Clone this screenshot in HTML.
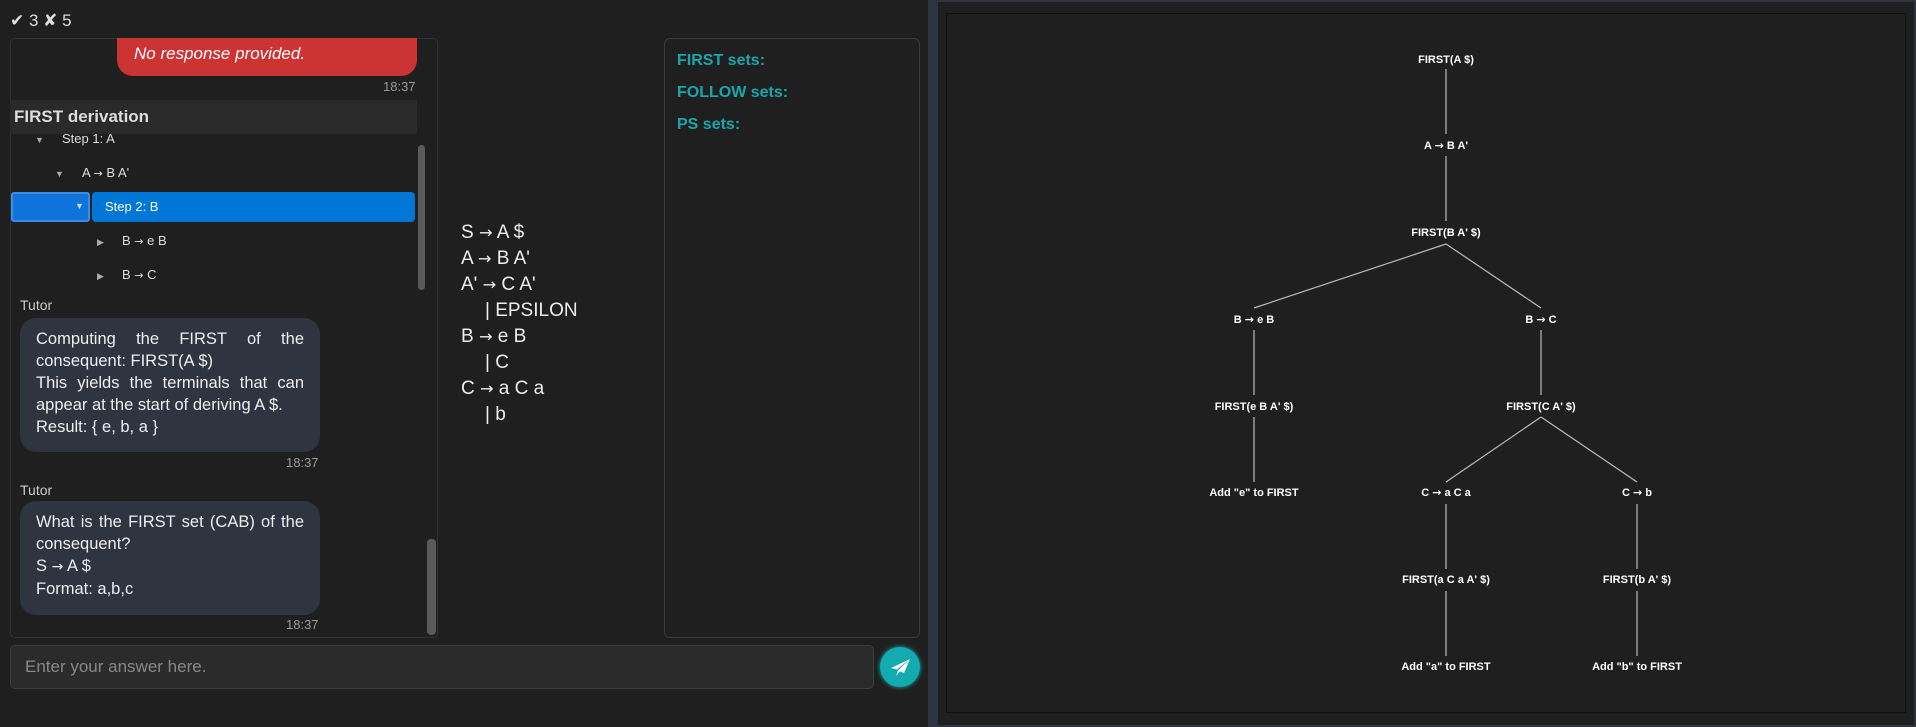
<!DOCTYPE html>
<html><head><meta charset="utf-8"><style>
*{box-sizing:border-box;margin:0;padding:0}
body{width:1916px;height:727px;background:#1f1f1f;color:#e6e6e6;font-family:"Liberation Sans","DejaVu Sans",sans-serif;position:relative;overflow:hidden}
.a{position:absolute;white-space:nowrap}
.bub{position:absolute;background:#2f3441;border-radius:16px;color:#eee;font-size:16.5px;line-height:22px;padding:10px 16px;text-align:justify}
.ts{position:absolute;font-size:13px;color:#999}
.tree{font-size:13px;color:#ddd}
.g{position:absolute;left:461px;font-size:19px;color:#eee}
.h{position:absolute;left:677px;font-size:16px;font-weight:bold;color:#19a7ad}
.ar{font-family:"DejaVu Sans",sans-serif;font-size:0.85em}
</style></head><body>
<div class="a" style="left:10px;top:11px;font-size:17px;color:#ddd">✔ 3 ✘ 5</div>
<div class="a" style="left:10px;top:38px;width:428px;height:600px;border:1px solid #333;border-radius:5px"></div>
<div class="a" style="left:117px;top:38px;width:300px;height:38px;background:#cc3333;border-radius:0 0 16px 16px;font-style:italic;font-size:17px;padding:6px 17px;color:#fff">No response provided.</div>
<div class="ts" style="left:383px;top:79px">18:37</div>
<div class="a" style="left:10px;top:100px;width:407px;height:34px;background:#2a2a2a;font-size:17px;font-weight:bold;padding:7px 4px;color:#ddd">FIRST derivation</div>
<div class="a tree" style="left:35px;top:131px"><span style="font-size:9px;color:#aaa">▼</span>&nbsp;&nbsp;&nbsp;&nbsp;&nbsp;Step 1: A</div>
<div class="a tree" style="left:55px;top:165px"><span style="font-size:9px;color:#aaa">▼</span>&nbsp;&nbsp;&nbsp;&nbsp;&nbsp;A <span class="ar">→</span> B A'</div>
<div class="a" style="left:11px;top:192px;width:79px;height:30px;background:#0e73da;border:2px solid #3b8de6;border-radius:3px"></div>
<div class="a" style="left:75px;top:201px;font-size:9px;color:#cde">▼</div>
<div class="a tree" style="left:92px;top:192px;width:323px;height:30px;background:#0077d7;border-radius:4px;padding:7px 13px;color:#fff">Step 2: B</div>
<div class="a tree" style="left:97px;top:233px"><span style="font-size:9px;color:#aaa">▶</span>&nbsp;&nbsp;&nbsp;&nbsp;&nbsp;B <span class="ar">→</span> e B</div>
<div class="a tree" style="left:97px;top:267px"><span style="font-size:9px;color:#aaa">▶</span>&nbsp;&nbsp;&nbsp;&nbsp;&nbsp;B <span class="ar">→</span> C</div>
<div class="a" style="left:418px;top:145px;width:7px;height:145px;background:#5a5a5a;border-radius:4px"></div>
<div class="a" style="left:20px;top:297px;font-size:14px;color:#ccc">Tutor</div>
<div class="bub" style="left:20px;top:318px;width:300px;height:134px">Computing the FIRST of the consequent: FIRST(A $)<br>This yields the terminals that can appear at the start of deriving A $.<br>Result: { e, b, a }</div>
<div class="ts" style="left:286px;top:455px">18:37</div>
<div class="a" style="left:20px;top:482px;font-size:14px;color:#ccc">Tutor</div>
<div class="bub" style="left:20px;top:501px;width:300px;height:114px">What is the FIRST set (CAB) of the consequent?<br>S <span class="ar">→</span> A $<br>Format: a,b,c</div>
<div class="ts" style="left:286px;top:617px">18:37</div>
<div class="a" style="left:427px;top:539px;width:9px;height:96px;background:#5a5a5a;border-radius:4px"></div>
<div class="a" style="left:10px;top:645px;width:864px;height:44px;background:#2b2b2b;border:1px solid #3c3c3c;border-radius:5px;font-size:17px;color:#888;padding:11px 14px">Enter your answer here.</div>
<div class="a" style="left:880px;top:647px;width:40px;height:40px;border-radius:50%;background:#13aab0;box-shadow:0 0 5px #1bb"></div>
<svg class="a" style="left:886px;top:654px" width="28" height="28" viewBox="0 0 28 28"><path d="M24 5 L5 14 L11 15.5 Z M24 5 L12 16.5 L10 22 Z M24 5 L13 17 L18 19 Z" fill="#fff"/></svg>
<div class="g" style="top:222px">S <span class="ar">→</span> A $</div>
<div class="g" style="top:248px">A <span class="ar">→</span> B A'</div>
<div class="g" style="top:274px">A' <span class="ar">→</span> C A'</div>
<div class="g" style="top:300px;left:485px">| EPSILON</div>
<div class="g" style="top:326px">B <span class="ar">→</span> e B</div>
<div class="g" style="top:352px;left:485px">| C</div>
<div class="g" style="top:378px">C <span class="ar">→</span> a C a</div>
<div class="g" style="top:404px;left:485px">| b</div>
<div class="a" style="left:664px;top:38px;width:256px;height:600px;border:1px solid #3a3a3a;border-radius:6px"></div>
<div class="h" style="top:52px">FIRST sets:</div>
<div class="h" style="top:84px">FOLLOW sets:</div>
<div class="h" style="top:116px">PS sets:</div>
<div class="a" style="left:928px;top:0;width:8px;height:727px;background:#2e3340"></div>
<div class="a" style="left:936px;top:0;width:980px;height:727px;background:#1f1f1f;border:2px solid #2e3340"></div>
<div class="a" style="left:946px;top:13px;width:960px;height:700px;border:1px solid #111"></div>
<svg class="a" style="left:0;top:0" width="1916" height="727">
<g stroke="#bbb" stroke-width="1.2" fill="none">
<line x1="1446" y1="69" x2="1446" y2="134"/>
<line x1="1446" y1="156" x2="1446" y2="221"/>
<line x1="1446" y1="244" x2="1254" y2="308"/>
<line x1="1446" y1="244" x2="1541" y2="308"/>
<line x1="1254" y1="330" x2="1254" y2="395"/>
<line x1="1541" y1="330" x2="1541" y2="395"/>
<line x1="1254" y1="417" x2="1254" y2="482"/>
<line x1="1541" y1="417" x2="1446" y2="482"/>
<line x1="1541" y1="417" x2="1637" y2="482"/>
<line x1="1446" y1="504" x2="1446" y2="569"/>
<line x1="1637" y1="504" x2="1637" y2="569"/>
<line x1="1446" y1="591" x2="1446" y2="656"/>
<line x1="1637" y1="591" x2="1637" y2="656"/>
</g>
<g fill="#fff" font-family="Liberation Sans,DejaVu Sans,sans-serif" font-size="11" font-weight="bold" text-anchor="middle">
<text x="1446" y="63">FIRST(A $)</text>
<text x="1446" y="149">A <tspan font-family="DejaVu Sans">→</tspan> B A'</text>
<text x="1446" y="236">FIRST(B A' $)</text>
<text x="1254" y="323">B <tspan font-family="DejaVu Sans">→</tspan> e B</text>
<text x="1541" y="323">B <tspan font-family="DejaVu Sans">→</tspan> C</text>
<text x="1254" y="410">FIRST(e B A' $)</text>
<text x="1541" y="410">FIRST(C A' $)</text>
<text x="1254" y="496">Add "e" to FIRST</text>
<text x="1446" y="496">C <tspan font-family="DejaVu Sans">→</tspan> a C a</text>
<text x="1637" y="496">C <tspan font-family="DejaVu Sans">→</tspan> b</text>
<text x="1446" y="583">FIRST(a C a A' $)</text>
<text x="1637" y="583">FIRST(b A' $)</text>
<text x="1446" y="670">Add "a" to FIRST</text>
<text x="1637" y="670">Add "b" to FIRST</text>
</g>
</svg>
</body></html>
